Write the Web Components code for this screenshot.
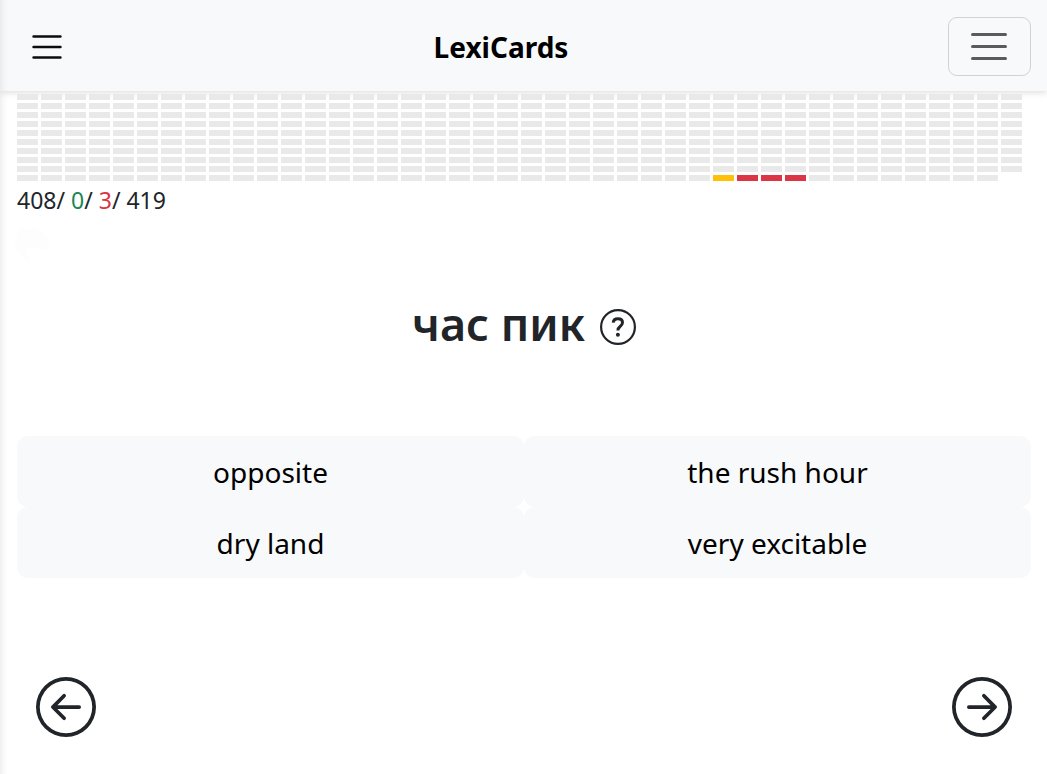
<!DOCTYPE html>
<html lang="en">
<head>
<meta charset="utf-8">
<meta name="viewport" content="width=device-width, initial-scale=1">
<title>LexiCards</title>
<style>
  body { margin: 0; background: #fff; color: #212529; font-family: "Segoe UI", "Noto Sans", "Open Sans", sans-serif; }
</style>
</head>
<body>
<lexi-app>
  <lexi-header slot="header">LexiCards</lexi-header>
  <lexi-progress total="419" current="407" wrong="408,409,410"></lexi-progress>
  <lexi-stats known="408" right="0" wrong="3" total="419"></lexi-stats>
  <lexi-loader></lexi-loader>
  <lexi-question>час пик</lexi-question>
  <lexi-answers>
    <lexi-answer>opposite</lexi-answer>
    <lexi-answer>the rush hour</lexi-answer>
    <lexi-answer>dry land</lexi-answer>
    <lexi-answer>very excitable</lexi-answer>
  </lexi-answers>
  <lexi-pager></lexi-pager>
</lexi-app>

<script>
const define = (name, render, setup) => {
  customElements.define(name, class extends HTMLElement {
    connectedCallback() {
      if (this.shadowRoot) return;
      const root = this.attachShadow({ mode: "open" });
      root.innerHTML = render(this);
      if (setup) setup(root, this);
    }
  });
};

const reset = `
  *, *::before, *::after { box-sizing: border-box; }
  button { font: inherit; color: inherit; background: none; border: 0; margin: 0; padding: 0; cursor: pointer; }
  svg { display: block; }
`;

define("lexi-app", () => `
  <style>
    ${reset}
    :host { display: block; position: relative; min-height: 100vh; padding-top: 1px; box-sizing: border-box; }
    main { padding: 3px 16px 36px 17px; }
    /* edge shadow of the closed side drawer */
    .drawer-edge { position: absolute; top: 0; bottom: 0; left: 0; width: 8px; z-index: 2; pointer-events: none;
      background: linear-gradient(to right, rgba(0,0,0,.06), rgba(0,0,0,.02) 50%, transparent); }
  </style>
  <slot name="header"></slot>
  <main><slot></slot></main>
  <div class="drawer-edge"></div>
`);

define("lexi-header", () => `
  <style>
    ${reset}
    :host { display: flex; align-items: center; justify-content: space-between; box-sizing: border-box; height: 90px;
      padding: 0 16px 0 32px; background: #f8f9fb; color: #000; box-shadow: 0 2px 6px rgba(0,0,0,.12); }
    h1 { margin: 0; padding-top: 2px; font-size: 28px; line-height: 40px; font-weight: 700; }
    .menu { padding-top: 2px; margin-right: -8px; }
    .toggler { height: 59px; width: 83px; border: 1px solid #d1d2d4; border-radius: 9px; display: flex; align-items: center; justify-content: center; color: #5a5b5d; }
  </style>
  <button class="menu" aria-label="Open menu">
    <svg width="30" height="30" viewBox="0 0 30 30" fill="none" stroke="#0c0c0c" stroke-width="2.4" stroke-linecap="round"><path d="M1.500 4.500h27M1.500 15h27M1.500 25.500h27"/></svg>
  </button>
  <h1><slot></slot></h1>
  <button class="toggler" aria-label="Toggle navigation">
    <svg width="36" height="36" viewBox="0 0 36 36" fill="none" stroke="currentColor" stroke-width="3" stroke-linecap="round"><path d="M1.500 6.500h33M1.500 18.500h33M1.500 30.500h33"/></svg>
  </button>
`);

define("lexi-progress", () => `
  <style>
    :host { display: grid; grid-template-columns: repeat(auto-fill, 21px); grid-auto-rows: 6px; gap: 3px; }
    i { background: #e9e9e9; }
    i.current { background: #ffc107; }
    i.wrong { background: #dc3545; }
  </style>
`, (root, host) => {
  const wrong = host.getAttribute("wrong").split(",").map(Number);
  const current = Number(host.getAttribute("current"));
  for (let n = 0; n < Number(host.getAttribute("total")); n++) {
    const cell = document.createElement("i");
    if (n === current) cell.className = "current";
    if (wrong.includes(n)) cell.className = "wrong";
    root.append(cell);
  }
});

define("lexi-stats", el => `
  <style>
    :host { display: block; font-size: 23px; line-height: 38px; }
    .right { color: #198754; }
    .wrong { color: #dc3545; }
  </style>
  ${el.getAttribute("known")}/ <span class="right">${el.getAttribute("right")}</span>/
  <span class="wrong">${el.getAttribute("wrong")}</span>/ ${el.getAttribute("total")}
`);

define("lexi-loader", () => `
  <style>
    :host { display: block; height: 46px; padding-top: 6px; box-sizing: border-box; margin-left: -4px; }
    svg { display: block; }
  </style>
  <svg width="40" height="40" viewBox="0 0 40 40" aria-hidden="true"><path fill="#fdfdfd" d="M8 2l7 3 6-2 8 4 8 10-1 8-11-1-8-2-5 4 5 11-9-7-7-9 3-10z"/></svg>
`);

define("lexi-question", () => `
  <style>
    ${reset}
    :host { display: flex; align-items: center; justify-content: center; gap: 15px; height: 124px; }
    h2 { margin: 0; padding-bottom: 6px; font-size: 45px; line-height: 60px; font-weight: 600; }
  </style>
  <h2><slot></slot></h2>
  <button aria-label="Show hint">
    <svg width="36" height="36" viewBox="0 0 36 36" fill="none" stroke="currentColor"><circle cx="18" cy="18" r="16.9" stroke-width="2.2"/><path d="M13.200 13.600c.2-2.700 2.100-3.900 4.700-3.900 2.700 0 4.600 1.400 4.600 3.900 0 2-1.100 3-2.600 4.100-1.500 1.100-2 1.800-2 3.700" stroke-width="3"/><circle cx="17.900" cy="25.800" r="2" fill="currentColor" stroke="none"/></svg>
  </button>
`);

define("lexi-answers", () => `
  <style>
    :host { display: grid; grid-template-columns: 1fr 1fr; padding: 47px 0 99px; }
  </style>
  <slot></slot>
`);

define("lexi-answer", () => `
  <style>
    ${reset}
    :host { display: block; }
    button { display: block; width: 100%; padding: 16px 18px 15px; border-radius: 11px; background: #f8f9fb; color: #000; font-size: 28px; line-height: 40px; }
  </style>
  <button><slot></slot></button>
`);

define("lexi-pager", () => `
  <style>
    ${reset}
    :host { display: flex; justify-content: space-between; padding: 0 19px; }
  </style>
  <button aria-label="Previous card">
    <svg width="60" height="60" viewBox="0 0 16 16" fill="currentColor"><path fill-rule="evenodd" d="M1 8a7 7 0 1 0 14 0A7 7 0 0 0 1 8m15 0A8 8 0 1 1 0 8a8 8 0 0 1 16 0m-4.500-.5a.5.5 0 0 1 0 1H5.707l2.147 2.146a.5.5 0 0 1-.708.708l-3-3a.5.5 0 0 1 0-.708l3-3a.5.5 0 1 1 .708.708L5.707 7.500z"/></svg>
  </button>
  <button aria-label="Next card">
    <svg width="60" height="60" viewBox="0 0 16 16" fill="currentColor"><path fill-rule="evenodd" d="M1 8a7 7 0 1 0 14 0A7 7 0 0 0 1 8m15 0A8 8 0 1 1 0 8a8 8 0 0 1 16 0M4.500 7.500a.5.5 0 0 0 0 1h5.793l-2.147 2.146a.5.5 0 0 0 .708.708l3-3a.5.5 0 0 0 0-.708l-3-3a.5.5 0 1 0-.708.708L10.293 7.500z"/></svg>
  </button>
`);
</script>
</body>
</html>
